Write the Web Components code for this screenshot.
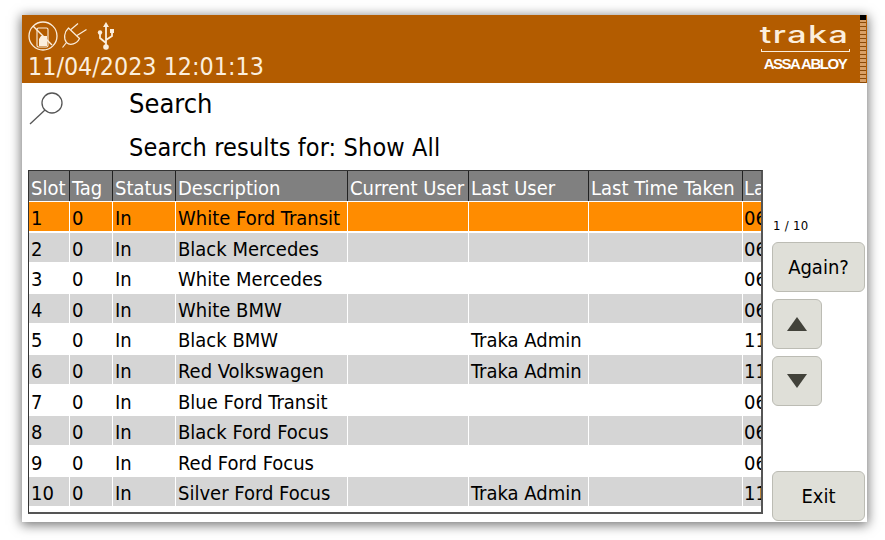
<!DOCTYPE html>
<html>
<head>
<meta charset="utf-8">
<title>Search</title>
<style>
  html, body { margin: 0; background: #fff; }
  body { width: 885px; height: 540px; padding: 15px 18px 18px 22px; box-sizing: border-box; overflow: hidden; }
</style>
</head>
<body>
<traka-screen>
  <traka-header slot="header" datetime="11/04/2023 12:01:13"></traka-header>
  <traka-heading slot="heading" title="Search" subtitle="Search results for: Show All"></traka-heading>
  <traka-table slot="table"></traka-table>
  <traka-side slot="side" count="1 / 10"></traka-side>
</traka-screen>

<script>
  const FONT = '"DejaVu Sans Condensed", "DejaVu Sans", Tahoma, sans-serif';

  class TrakaScreen extends HTMLElement {
    connectedCallback() {
      const shadow = this.attachShadow({mode: 'open'});
      shadow.innerHTML = `
        <style>
          :host {
            display: flex;
            flex-direction: column;
            width: 845px;
            height: 507px;
            background: #fff;
            box-shadow: 0 2px 11px 1px rgba(0,0,0,.55);
            font-family: ${FONT};
            font-stretch: condensed;
            color: #000;
          }
          .main { display: flex; flex: 1; min-height: 0; padding-left: 6px; gap: 9px; }
        </style>
        <slot name="header"></slot>
        <slot name="heading"></slot>
        <div class="main">
          <slot name="table"></slot>
          <slot name="side"></slot>
        </div>
      `;
    }
  }

  class TrakaHeader extends HTMLElement {
    connectedCallback() {
      const shadow = this.attachShadow({mode: 'open'});
      shadow.innerHTML = `
        <style>
          :host {
            display: flex;
            height: 68px;
            background: #b35c00;
            color: #fbeedd;
          }
          .left { display: flex; flex-direction: column; padding: 5px 0 0 6px; flex: 1; }
          .icons { display: flex; height: 33px; }
          .icons svg { display: block; fill: none; stroke: #fbeedd; overflow: visible; }
          .time { font-size: 24.8px; line-height: 28px; white-space: nowrap; }
          .logo { display: flex; flex-direction: column; align-items: center; width: 90px; margin-top: 9px; margin-right: 10px; }
          .word { font: 500 24px/22px "Inter", sans-serif; letter-spacing: 1px; transform: scaleX(1.42); height: 22px; }
          .rule { width: 89px; height: 3px; box-sizing: border-box; border: 1px solid #fbeedd; border-top: 0; margin-top: 3px; }
          .assa { font: bold 15px/16px "Liberation Sans", sans-serif; letter-spacing: -1.45px; color: #fff; margin-top: 4px; white-space: nowrap; }
          .strip {
            width: 6px;
            margin-right: 1px;
            background:
              linear-gradient(#000, #000) top / 100% 5px no-repeat,
              repeating-linear-gradient(#d9a066 0 3px, #8a4a08 3px 4px);
          }
        </style>
        <div class="left">
          <div class="icons">
            <svg width="32" height="32" viewBox="0 0 32 32" stroke-width="1.3">
              <circle cx="15" cy="16" r="14"/>
              <rect x="9" y="8" width="11" height="19" rx="1.5" stroke-width="1.1"/>
              <path d="M11 26 V19 L13 16 H19 V26 Z" fill="#fbeedd" stroke="none"/>
              <path d="M5 6 L24 25" stroke-width="1.5"/>
            </svg>
            <svg width="30" height="32" viewBox="0 0 30 32" stroke-width="1.2" style="margin-left:2px">
              <path d="M6.5 8 L17.5 18.5 C15 24 8 26 4.5 22.5 C1.5 19 2 12 6.5 8 Z"/>
              <path d="M9 9.5 L16 3.5 M15 15.5 L24.5 9.5"/>
              <path d="M4.5 22.5 L0.5 27.5"/>
            </svg>
            <svg width="24" height="32" viewBox="0 0 24 32" style="margin-left:2px">
              <path d="M12 4 V27 M12 23 L6 18 V13 M12 20 L18 16 V11" stroke-width="1.8"/>
              <path d="M12 2 L15 7 H9 Z" fill="#fbeedd" stroke="none"/>
              <circle cx="12" cy="27" r="2.8" fill="#fbeedd" stroke="none"/>
              <circle cx="6" cy="12.5" r="2.2" fill="#fbeedd" stroke="none"/>
              <rect x="16" y="9" width="4" height="4" fill="#fbeedd" stroke="none"/>
            </svg>
          </div>
          <div class="time">${this.getAttribute('datetime')}</div>
        </div>
        <div class="logo">
          <div class="word">traka</div>
          <div class="rule"></div>
          <div class="assa">ASSA ABLOY</div>
        </div>
        <div class="strip"></div>
      `;
    }
  }

  class TrakaHeading extends HTMLElement {
    connectedCallback() {
      const shadow = this.attachShadow({mode: 'open'});
      shadow.innerHTML = `
        <style>
          :host { display: grid; grid-template-columns: 107px 1fr; height: 87px; }
          svg { display: block; margin: 9px 0 0 7px; fill: none; stroke: #555; }
          h1 { font-size: 27px; font-weight: normal; line-height: 42px; margin: 0; }
          p { font-size: 25px; line-height: 30px; margin: 8px 0 0; letter-spacing: .13px; white-space: nowrap; }
        </style>
        <svg width="36" height="36" viewBox="0 0 36 36" stroke-width="1.3">
          <circle cx="23" cy="11" r="10"/>
          <path d="M16 18 L1 32"/>
        </svg>
        <div>
          <h1>${this.getAttribute('title')}</h1>
          <p>${this.getAttribute('subtitle')}</p>
        </div>
      `;
    }
  }

  // last column is cut off by the table edge, only its first letters show
  const COLUMNS = ['Slot', 'Tag', 'Status', 'Description', 'Current User', 'Last User', 'Last Time Taken', 'La'];
  const ROWS = [
    ['1', '0', 'In', 'White Ford Transit', '', '', '', '06'],
    ['2', '0', 'In', 'Black Mercedes', '', '', '', '06'],
    ['3', '0', 'In', 'White Mercedes', '', '', '', '06'],
    ['4', '0', 'In', 'White BMW', '', '', '', '06'],
    ['5', '0', 'In', 'Black BMW', '', 'Traka Admin', '', '11'],
    ['6', '0', 'In', 'Red Volkswagen', '', 'Traka Admin', '', '11'],
    ['7', '0', 'In', 'Blue Ford Transit', '', '', '', '06'],
    ['8', '0', 'In', 'Black Ford Focus', '', '', '', '06'],
    ['9', '0', 'In', 'Red Ford Focus', '', '', '', '06'],
    ['10', '0', 'In', 'Silver Ford Focus', '', 'Traka Admin', '', '11'],
  ];

  class TrakaTable extends HTMLElement {
    connectedCallback() {
      const shadow = this.attachShadow({mode: 'open'});
      const cells = row => row.map(text => `<div class="cell">${text}</div>`).join('');
      shadow.innerHTML = `
        <style>
          :host {
            display: block;
            width: 735px;
            height: 344px;
            box-sizing: border-box;
            border: 1px solid #333;
            border-right-width: 2px;
            border-bottom-width: 2px;
            border-right-color: #555;
            border-bottom-color: #555;
            overflow: hidden;
            font-size: 20px;
          }
          .row {
            display: grid;
            grid-template-columns: 40px 42px 62px 171px 120px 119px 153px 19px;
            column-gap: 1px;
            height: 29px;
            margin-bottom: 1.6px;
          }
          .cell { padding-left: 2px; line-height: 33px; white-space: nowrap; overflow: hidden; min-width: 0; }
          .cell:last-child { padding-left: 1px; }
          .head { height: 30px; margin-bottom: 1px; background: #222; }
          .head .cell { background: #808080; color: #fff; line-height: 34px; }
          .row:nth-of-type(odd):not(.head) .cell { background: #d5d5d5; }
          .row.selected .cell { background: #ff8c00 !important; }
        </style>
        <div class="row head">${cells(COLUMNS)}</div>
        ${ROWS.map((row, i) => `<div class="row${i === 0 ? ' selected' : ''}">${cells(row)}</div>`).join('')}
      `;
    }
  }

  class TrakaButton extends HTMLElement {
    connectedCallback() {
      const shadow = this.attachShadow({mode: 'open'});
      shadow.innerHTML = `
        <style>
          :host {
            display: flex;
            align-items: center;
            justify-content: center;
            box-sizing: border-box;
            height: 50px;
            width: 50px;
            background: #dfdfd8;
            border: 1px solid #bcbcb4;
            border-radius: 6px;
            font-size: 20px;
          }
          :host([wide]) { width: 93px; }
        </style>
        <slot></slot>
      `;
    }
  }

  class TrakaSide extends HTMLElement {
    connectedCallback() {
      const shadow = this.attachShadow({mode: 'open'});
      shadow.innerHTML = `
        <style>
          :host { display: flex; flex-direction: column; width: 93px; height: 351px; }
          .count { font-size: 13px; letter-spacing: .3px; line-height: 14px; margin: 49px 0 9px 1px; }
          .stack { display: flex; flex-direction: column; gap: 7px; flex: 1; }
          .exit { margin-top: auto; }
          svg { display: block; fill: #42423a; }
        </style>
        <div class="count">${this.getAttribute('count')}</div>
        <div class="stack">
          <traka-button wide>Again?</traka-button>
          <traka-button><svg width="20" height="14"><path d="M10 0 L20 14 H0 Z"/></svg></traka-button>
          <traka-button><svg width="20" height="14"><path d="M0 0 H20 L10 14 Z"/></svg></traka-button>
          <traka-button wide class="exit">Exit</traka-button>
        </div>
      `;
    }
  }

  customElements.define('traka-screen', TrakaScreen);
  customElements.define('traka-header', TrakaHeader);
  customElements.define('traka-heading', TrakaHeading);
  customElements.define('traka-table', TrakaTable);
  customElements.define('traka-button', TrakaButton);
  customElements.define('traka-side', TrakaSide);
</script>
</body>
</html>
